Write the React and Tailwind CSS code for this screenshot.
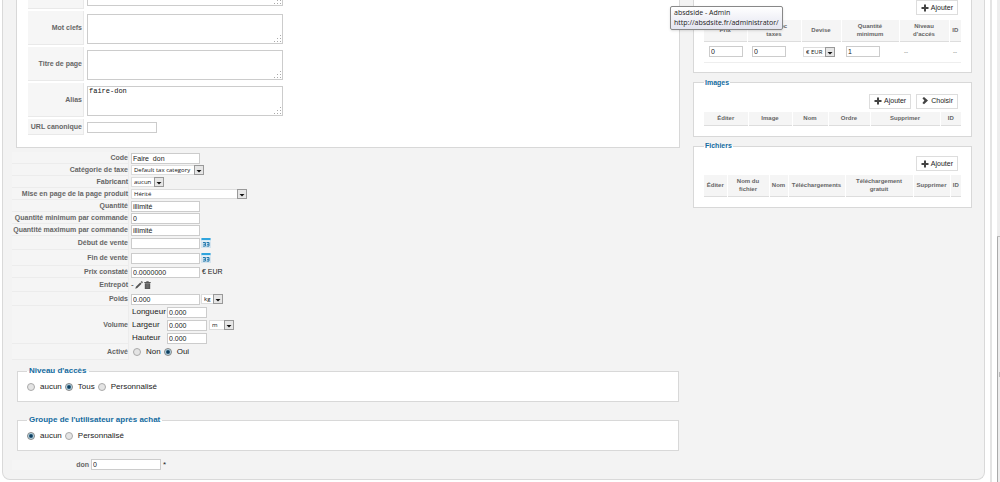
import React from 'react';

const PlusIcon = () => (
  <svg viewBox="0 0 8 8" className="w-[8px] h-[8px] shrink-0" fill="#444">
    <path d="M3 0.5h2v2.5h2.5v2H5v2.5H3V5H0.5V3H3z" />
  </svg>
);

const ChevronIcon = () => (
  <svg viewBox="0 0 8 8" className="w-[8px] h-[8px] shrink-0" fill="#444">
    <path d="M1.4 1.2L3 0l4 3.6L3 7.2 1.4 6l2-2.4z" />
  </svg>
);

const CalendarIcon = () => (
  <svg viewBox="0 0 10 10" className="w-[10px] h-[10px]">
    <rect width="10" height="10" fill="#d5e4ee" />
    <rect x="0.5" y="0" width="9" height="2.4" fill="#2fa4dd" />
    <rect x="0.5" y="2.4" width="9" height="1" fill="#fff" />
    <path d="M2 4.5h2.4v3.6H2M2.4 6.3h2M5.6 4.5H8v3.6H5.6M6 6.3h2" stroke="#2279ae" strokeWidth="1" fill="none" />
  </svg>
);

const PencilIcon = () => (
  <svg viewBox="0 0 8 8" className="w-[8px] h-[8px]" fill="#555">
    <path d="M0.3 7.7l0.6-2L5.2 1.4l1.4 1.4-4.3 4.3zM5.7 0.9l0.6-0.6q0.5-0.3 0.9 0.1l0.4 0.4q0.4 0.5 0 0.9l-0.5 0.6z" />
  </svg>
);

const TrashIcon = () => (
  <svg viewBox="0 0 7 8" className="w-[7px] h-[8px]" fill="#555">
    <path d="M0.3 1h2V0.2h2.4V1h2v1H0.3zM0.8 2.3h5.4V8H0.8z" />
    <path d="M2.3 3v4.2M3.5 3v4.2M4.7 3v4.2" stroke="#888" strokeWidth="0.4" />
  </svg>
);

const inputClass = 'block h-[11px] bg-white border border-[#ccc] px-px text-[7px] leading-[8px] text-[#222] outline-none';

const TextInput = ({ className, ...props }) => (
  <input type="text" className={`${inputClass} ${className}`} {...props} />
);

const Select = ({ className, label, value }) => (
  <span className={`relative block h-[10px] ${className}`}>
    <select
      aria-label={label}
      defaultValue={value}
      className="block w-full h-full appearance-none bg-white border border-[#ddd] pl-[2px] font-['Open_Sans',sans-serif] text-[6px] leading-[8px] text-[#111]"
    >
      <option>{value}</option>
    </select>
    <svg viewBox="0 0 10 10" className="absolute right-0 top-0 w-[10px] h-[10px] pointer-events-none">
      <rect x="0.5" y="0.5" width="9" height="9" fill="#e6e6e6" stroke="#999" />
      <path d="M2.5 5h5L5 7.5z" fill="#111" />
    </svg>
  </span>
);

const Radio = ({ name, label, checked }) => (
  <label className="flex items-center gap-[5px]">
    <input
      type="radio"
      name={name}
      defaultChecked={checked}
      className="appearance-none w-[8px] h-[8px] rounded-full border border-[#aaa] bg-[#e4e4e4] checked:border-[#888] checked:bg-[radial-gradient(circle,#0d3f60_30%,#b5d5e5_60%)]"
    />
    {label}
  </label>
);

const MetaRow = ({ id, label, value, top }) => (
  <div className="flex gap-[3px]">
    <label htmlFor={id} className={`flex w-[56px] items-center justify-end pr-px bg-[#f6f6f6] border-b border-r border-[#e9e9e9] text-[7px] font-bold text-[#666] ${top ? 'h-[9px]' : 'h-[34px]'}`}>
      {label}
    </label>
    <div className={`relative w-[196px] ${top ? 'h-[6px]' : 'mt-[3px] h-[30px]'}`}>
      <textarea
        id={id}
        aria-label={label || 'Description'}
        defaultValue={value}
        className={`block w-full h-full resize-none overflow-hidden bg-white border border-[#ccc] px-px font-['Liberation_Mono',monospace] text-[7px] leading-[8px] text-[#111] ${top ? 'border-t-0' : ''}`}
      />
      <svg viewBox="0 0 8 8" className="absolute right-px bottom-px w-[8px] h-[8px] pointer-events-none" fill="#aaa">
        <path d="M6 0h1v1H6zM6 3h1v1H6zM3 3h1v1H3zM6 6h1v1H6zM3 6h1v1H3zM0 6h1v1H0z" />
      </svg>
    </div>
  </div>
);

const Row = ({ label, id, height = 'h-[12px]', children }) => (
  <div className={`flex gap-[2px] ${height}`}>
    <label htmlFor={id} className="flex w-[117px] shrink-0 items-center justify-end whitespace-nowrap bg-[#f5f5f5] border-b border-r border-[#ececec] text-[7px] font-bold text-[#666]">
      {label}
    </label>
    <div className="flex items-center gap-px">{children}</div>
  </div>
);

const Button = ({ icon, children }) => (
  <button type="button" className="flex h-[15px] items-center gap-[2px] border border-[#ddd] bg-white px-[4px] text-[7px] text-[#222]">
    {icon}
    {children}
  </button>
);

const Panel = ({ title, children, className = '' }) => (
  <fieldset className={`border border-[#d8d8d8] bg-white px-[10px] ${className}`}>
    {title && <legend className="px-px text-[7px] leading-[10px] font-bold text-[#146ba0]">{title}</legend>}
    {children}
  </fieldset>
);

const DataTable = ({ columns, tall, children }) => (
  <table className="w-full table-fixed border-collapse text-center text-[6px] leading-[8px] text-[#666]">
    <thead>
      <tr className={`bg-[#f5f5f5] border-b border-[#ddd] ${tall ? 'h-[21px]' : 'h-[14px]'}`}>
        {columns.map(([name, width], i) => (
          <th key={i} style={{ width }} className="whitespace-pre border-l border-white p-0 font-bold first:border-l-0">
            {name}
          </th>
        ))}
      </tr>
    </thead>
    {children}
  </table>
);

const priceColumns = [['Prix', 43], ['Prix avec\ntaxes', 54], ['Devise', 40], ['Quantité\nminimum', 58], ['Niveau\nd\'accés', 50], ['ID', 12]];
const imageColumns = [['Éditer', 44], ['Image', 44], ['Nom', 36], ['Ordre', 42], ['Supprimer', 70], ['ID', 21]];
const fileColumns = [['Éditer', 23], ['Nom du\nfichier', 42], ['Nom', 19], ['Téléchargements', 57], ['Téléchargement\ngratuit', 68], ['Supprimer', 37], ['ID', 11]];

const volumes = ['Longueur', 'Largeur', 'Hauteur'];

const App = () => {
  return (
    <div className="flex items-start bg-white font-['Liberation_Sans',Arial,sans-serif] text-[8px] leading-[10px] text-[#222]">
      <main className="flex flex-1 items-start gap-[13px] ml-[2px] rounded-b-lg border border-t-0 border-[#d9d9d9] bg-[#f3f3f3] pl-[9px] pr-[13px] pb-[9px]">
        <form className="flex-1">
          <section className="ml-[4px] flex flex-col gap-[2px] border border-t-0 border-[#d8d8d8] bg-white pl-[11px] pb-[12px]">
            <MetaRow id="description" top />
            <MetaRow id="keywords" label="Mot clefs" />
            <MetaRow id="title" label="Titre de page" />
            <MetaRow id="alias" label="Alias" value="faire-don" />
            <div className="flex h-[16px] gap-[3px]">
              <label htmlFor="canonical" className="flex w-[56px] items-center justify-end whitespace-nowrap pr-px bg-[#f6f6f6] border-b border-r border-[#e9e9e9] text-[7px] font-bold text-[#666]">
                URL canonique
              </label>
              <div className="flex items-center">
                <TextInput id="canonical" className="w-[70px]" />
              </div>
            </div>
          </section>

          <section className="mt-[4px]">
            <Row label="Code" id="code"><TextInput id="code" className="w-[69px]" defaultValue="Faire_don" /></Row>
            <Row label="Catégorie de taxe"><Select label="Catégorie de taxe" className="w-[73px]" value="Default tax category" /></Row>
            <Row label="Fabricant"><Select label="Fabricant" className="w-[33px]" value="aucun" /></Row>
            <Row label="Mise en page de la page produit"><Select label="Mise en page" className="w-[116px]" value="Hérité" /></Row>
            <Row label="Quantité" id="qty"><TextInput id="qty" className="w-[69px]" defaultValue="illimité" /></Row>
            <Row label="Quantité minimum par commande" id="min"><TextInput id="min" className="w-[69px]" defaultValue="0" /></Row>
            <Row label="Quantité maximum par commande" id="max"><TextInput id="max" className="w-[69px]" defaultValue="illimité" /></Row>
            <Row label="Début de vente" id="start" height="h-[14px]">
              <TextInput id="start" className="w-[69px]" />
              <CalendarIcon />
            </Row>
            <Row label="Fin de vente" id="end" height="h-[16px]">
              <TextInput id="end" className="w-[69px]" />
              <CalendarIcon />
            </Row>
            <Row label="Prix constaté" id="msrp">
              <TextInput id="msrp" className="w-[69px]" defaultValue="0.0000000" />
              <span className="pl-px text-[7px]">€ EUR</span>
            </Row>
            <Row label="Entrepôt" height="h-[14px]">
              <span>-</span>
              <PencilIcon />
              <TrashIcon />
            </Row>
            <Row label="Poids" id="weight" height="h-[14px]">
              <TextInput id="weight" className="w-[69px]" defaultValue="0.000" />
              <Select label="Unité de poids" className="w-[22px]" value="kg" />
            </Row>
            <Row label="Volume" height="h-[38px]">
              <div className="flex flex-col gap-[2px] pl-px">
                {volumes.map((name) => (
                  <label key={name} className="flex items-center">
                    <span className="w-[35px]">{name}</span>
                    <TextInput className="w-[40px]" defaultValue="0.000" />
                  </label>
                ))}
              </div>
              <Select label="Unité de volume" className="ml-px w-[25px]" value="m" />
            </Row>
            <Row label="Activé" height="h-[16px]">
              <div className="flex gap-[3px] pl-[2px]">
                <Radio name="active" label="Non" />
                <Radio name="active" label="Oui" checked />
              </div>
            </Row>
          </section>

          <fieldset className="mt-[6px] ml-[5px] mr-px h-[36px] border border-[#d8d8d8] bg-white px-[9px]">
            <legend className="px-[2px] font-bold text-[#146ba0]">Niveau d'accès</legend>
            <div className="flex gap-[3px] pt-[6px]">
              <Radio name="access" label="aucun" />
              <Radio name="access" label="Tous" checked />
              <Radio name="access" label="Personnalisé" />
            </div>
          </fieldset>
          <fieldset className="mt-[13px] ml-[5px] mr-px h-[36px] border border-[#d8d8d8] bg-white px-[9px]">
            <legend className="px-[2px] font-bold text-[#146ba0]">Groupe de l'utilisateur après achat</legend>
            <div className="flex gap-[3px] pt-[6px]">
              <Radio name="group" label="aucun" checked />
              <Radio name="group" label="Personnalisé" />
            </div>
          </fieldset>

          <div className="mt-[8px] flex items-center gap-[2px]">
            <label htmlFor="don" className="w-[77px] bg-[#f5f5f5] text-right text-[7px] font-bold text-[#666]">don</label>
            <TextInput id="don" className="w-[70px]" defaultValue="0" />
            <span>*</span>
          </div>
        </form>

        <aside className="w-[278px] shrink-0">
          <Panel className="border-t-0 pb-[9px]">
            <div className="flex justify-end pr-[3px] pb-[5px]"><Button icon={<PlusIcon />}>Ajouter</Button></div>
            <DataTable columns={priceColumns} tall>
              <tbody>
                <tr className="h-[21px] border-b border-[#eee] text-left">
                  <td className="p-0 pl-[5px]"><TextInput aria-label="Prix" className="w-[34px]" defaultValue="0" /></td>
                  <td className="p-0 pl-[5px]"><TextInput aria-label="Prix avec taxes" className="w-[34px]" defaultValue="0" /></td>
                  <td className="p-0 pl-[2px]"><Select label="Devise" className="w-[32px]" value="€ EUR" /></td>
                  <td className="p-0 pl-[5px]"><TextInput aria-label="Quantité minimum" className="w-[34px]" defaultValue="1" /></td>
                  <td className="p-0 pl-[5px]">--</td>
                  <td className="p-0 text-center">--</td>
                </tr>
              </tbody>
            </DataTable>
          </Panel>
          <Panel title="Images" className="mt-[5px] pb-[10px]">
            <div className="flex justify-end gap-[5px] pr-[3px] pt-[6px] pb-[3px]">
              <Button icon={<PlusIcon />}>Ajouter</Button>
              <Button icon={<ChevronIcon />}>Choisir</Button>
            </div>
            <DataTable columns={imageColumns} />
          </Panel>
          <Panel title="Fichiers" className="mt-[4px] pb-[10px]">
            <div className="flex justify-end pr-[3px] pt-[5px] pb-[4px]"><Button icon={<PlusIcon />}>Ajouter</Button></div>
            <DataTable columns={fileColumns} tall />
          </Panel>
        </aside>
      </main>

      {/* window edge with the scroll track */}
      <div className="ml-[5px] flex h-screen w-[10px] border-l-2 border-[#e4e4e4]">
        <div className="ml-auto flex w-[3px] flex-col bg-[#ededed]">
          <div className="h-[237px] border-b border-[#bbb]" />
          <div className="flex flex-1 flex-col items-end border-l border-[#aaa] pt-[135px]">
            <div className="h-[5px] w-px bg-[#bbb]" />
          </div>
        </div>
      </div>

      {/* link tooltip */}
      <div role="tooltip" className="absolute left-[670px] top-[6px] rounded-[2px] border border-[#888] bg-linear-to-b from-white to-[#e4e5f0] px-[3px] py-px font-['Open_Sans',sans-serif] text-[7px] leading-[10px] text-[#222] shadow-sm">
        absdside - Admin<br />
        http://absdsite.fr/administrator/
      </div>
    </div>
  );
};

export default App;
